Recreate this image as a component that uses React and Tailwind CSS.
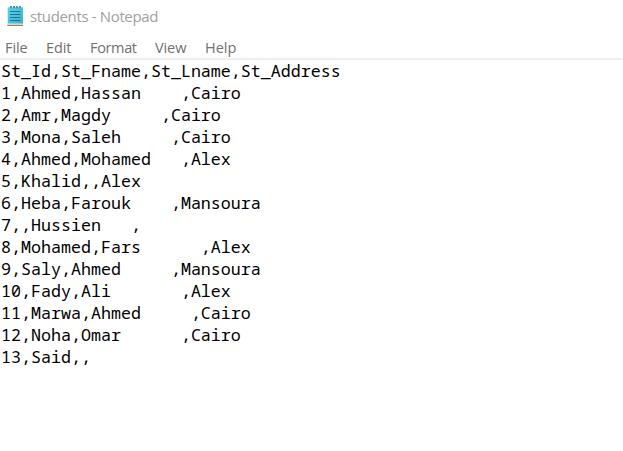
const MENU = [
  { label: "File", slot: "w-[41px]", text: "tracking-[-0.1px]" },
  { label: "Edit", slot: "w-11", text: "tracking-[-0.1px]" },
  { label: "Format", slot: "w-[65px]", text: "tracking-[-0.35px]" },
  { label: "View", slot: "w-[50px]", text: "tracking-[-0.1px]" },
  { label: "Help", slot: "w-10", text: "tracking-[0px]" },
];

const LINES = [
  "St_Id,St_Fname,St_Lname,St_Address",
  "1,Ahmed,Hassan    ,Cairo",
  "2,Amr,Magdy     ,Cairo",
  "3,Mona,Saleh     ,Cairo",
  "4,Ahmed,Mohamed   ,Alex",
  "5,Khalid,,Alex",
  "6,Heba,Farouk    ,Mansoura",
  "7,,Hussien   ,",
  "8,Mohamed,Fars      ,Alex",
  "9,Saly,Ahmed     ,Mansoura",
  "10,Fady,Ali       ,Alex",
  "11,Marwa,Ahmed     ,Cairo",
  "12,Noha,Omar      ,Cairo",
  "13,Said,,",
];

function NotepadIcon() {
  return (
    <svg className="h-[21px] w-[17px] shrink-0" viewBox="0 0 17 21">
      <defs>
        <linearGradient id="pad" x1="0" y1="0" x2="1" y2="1">
          <stop offset="0" stopColor="#62d2e6" />
          <stop offset="1" stopColor="#38b2d3" />
        </linearGradient>
      </defs>
      <rect x="0.3" y="18.6" width="15.7" height="1.2" fill="#8c5a3c" />
      <rect x="0.3" y="17.6" width="15.7" height="1" fill="#f3e6da" />
      <rect x="0.7" y="1.3" width="15.3" height="16.3" fill="url(#pad)" />
      <path d="M4 0v2.2M7 0v2.2M10 0v2.2M13 0v2.2" stroke="#2f7c96" strokeWidth="1.5" />
      <path d="M3 5.5h10.5M3 8.5h10.5M3 11.5h10.5M3 14.5h10.5" stroke="#1c7898" strokeWidth="1.1" />
    </svg>
  );
}

export default function App() {
  return (
    <div className="flex h-[451px] w-[623px] flex-col overflow-hidden bg-white font-['Open_Sans','Noto_Sans',sans-serif]">
      <header className="flex h-9 shrink-0 items-start gap-[6px] pl-[7px] pt-[6px]">
        <NotepadIcon />
        <h1 className="whitespace-pre text-[15px] leading-[21px] tracking-[-0.35px] text-[#a0a0a0]">students - Notepad</h1>
      </header>
      <nav className="flex h-6 shrink-0 border-b-2 border-[#f0f0f0] pl-[5px] text-[14.5px] leading-[23px] text-[#707070]">
        {MENU.map((m) => (
          <button key={m.label} className={`${m.slot} ${m.text} shrink-0 text-left`}>
            {m.label}
          </button>
        ))}
      </nav>
      <pre className="grow pl-px font-['Noto_Sans_Mono','DejaVu_Sans_Mono',monospace] text-[16.66px] leading-[22px] text-black">
        {LINES.join("\n")}
      </pre>
    </div>
  );
}
